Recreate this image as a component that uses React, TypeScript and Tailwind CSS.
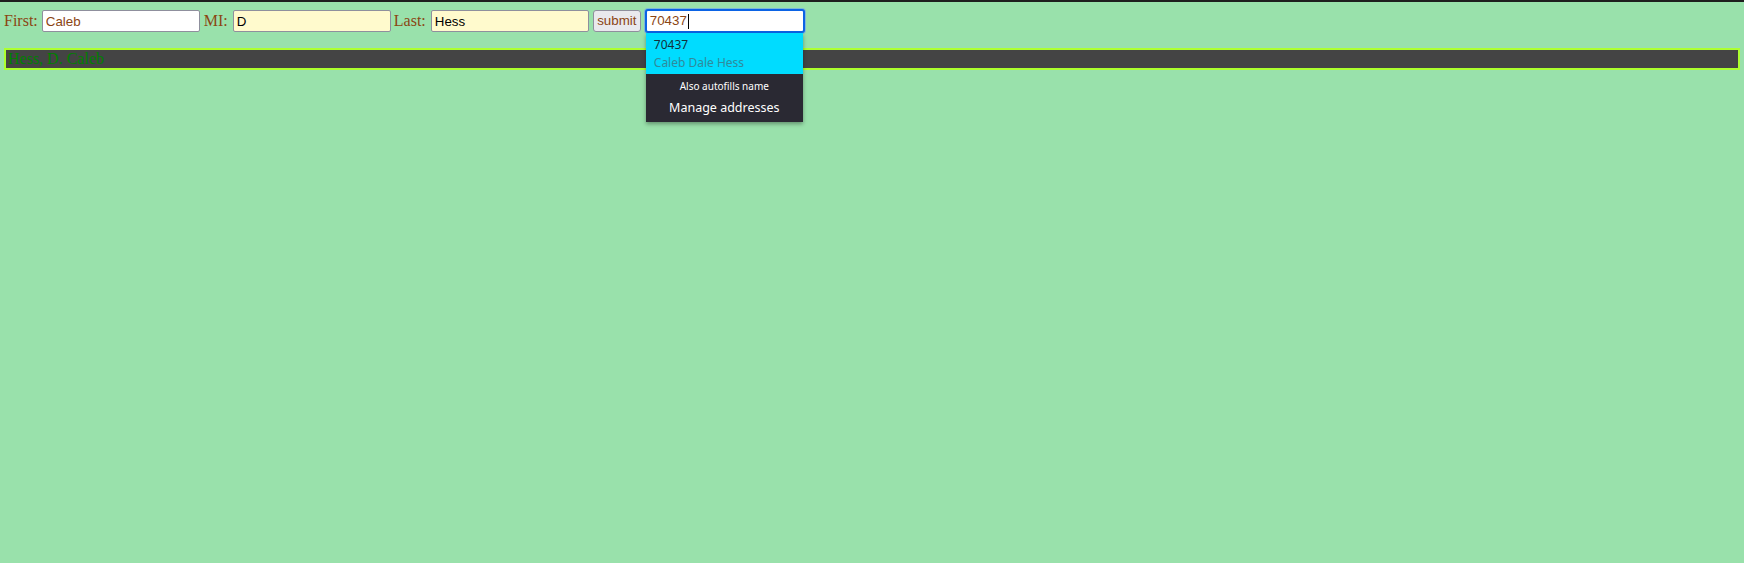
import React from "react";

export default function App() {
  return (
    <div className="h-[563px] overflow-hidden w-full bg-[#99e1ab] border-t-2 border-[#1e1e1e] relative" style={{ fontFamily: '"Liberation Serif", serif' }}>
      <div className="flex items-center h-[22px] mt-[8px] ml-[4px] text-[16px] text-[#8b4513]">
        <span className="leading-none">First:</span>
        <input
          readOnly
          value="Caleb"
          className="ml-[4px] w-[158px] h-[22px] bg-white border border-[#8f8f9d] rounded-[2px] px-[3px] text-[13.33px] text-[#8b4513] outline-none"
          style={{ fontFamily: '"Liberation Sans", Arial, sans-serif' }}
        />
        <span className="ml-[4px] leading-none">MI:</span>
        <input
          readOnly
          value="D"
          className="ml-[5px] w-[158px] h-[22px] bg-[#fffacd] border border-[#8f8f9d] rounded-[2px] px-[3px] text-[13.33px] text-black outline-none"
          style={{ fontFamily: '"Liberation Sans", Arial, sans-serif' }}
        />
        <span className="ml-[3px] leading-none">Last:</span>
        <input
          readOnly
          value="Hess"
          className="ml-[5px] w-[158px] h-[22px] bg-[#fffacd] border border-[#8f8f9d] rounded-[2px] px-[3px] text-[13.33px] text-black outline-none"
          style={{ fontFamily: '"Liberation Sans", Arial, sans-serif' }}
        />
        <button
          className="ml-[4px] w-[48px] h-[22px] bg-[#e9e9ed] border border-[#8f8f9d] rounded-[3px] text-[13.33px] text-[#8b4513] leading-none"
          style={{ fontFamily: '"Liberation Sans", Arial, sans-serif' }}
        >
          submit
        </button>
        <div className="relative ml-[4px]">
          <div className="w-[160px] h-[24px] -my-[1px] bg-white border-2 border-[#0b63e5] rounded-[3px] ring-1 ring-[#7fb9d6] flex items-center pl-[3px] text-[13.33px] text-[#8b4513]" style={{ fontFamily: '"Liberation Sans", Arial, sans-serif' }}>
            70437<span className="inline-block w-[1px] h-[15px] bg-black ml-[1px]" />
          </div>
          <div className="absolute left-[1px] top-[23px] w-[157px] shadow-[0_2px_4px_rgba(0,0,0,0.35)] z-10" style={{ fontFamily: '"Noto Sans", "Open Sans", sans-serif' }}>
            <div className="bg-[#00dcff] h-[41px] pl-[8px] pt-[4px] flex flex-col">
              <span className="text-[12px] leading-[15px] text-[#13303a]">70437</span>
              <span className="text-[12px] leading-[15px] mt-[3px] text-[#2f8b9b]">Caleb Dale Hess</span>
            </div>
            <div className="bg-[#2a2933] h-[48px] flex flex-col items-center pt-[5px]">
              <span className="text-[10px] leading-[14px] text-white">Also autofills name</span>
              <span className="text-[12.5px] leading-[17px] text-white mt-[6px]">Manage addresses</span>
            </div>
          </div>
        </div>
      </div>
      <div className="mx-[4px] mt-[16px] h-[22px] bg-[#444444] border-2 border-[#adff2f] flex items-center pl-[2px] text-[16px] text-[#008000] leading-none">
        Hess, D. Caleb
      </div>
    </div>
  );
}
